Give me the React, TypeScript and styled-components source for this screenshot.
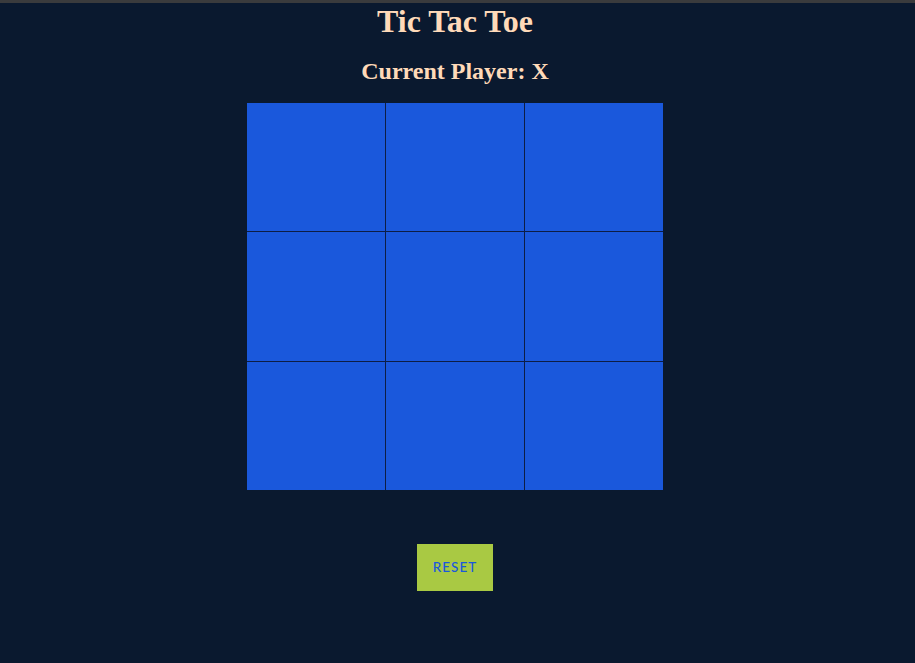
import React, { useState } from "react";
import styled, { createGlobalStyle } from "styled-components";

const Global = createGlobalStyle`
  html, body { margin: 0; padding: 0; background: #0a192f; }
  body { font-family: "Liberation Serif", "Times New Roman", serif; }
`;

const TopStrip = styled.div`
  height: 3px;
  background: #3a3b3d;
`;

const Page = styled.main`
  display: flex;
  flex-direction: column;
  align-items: center;
  min-height: 660px;
  padding-right: 5px;
  background: #0a192f;
`;

const Title = styled.h1`
  margin: 0;
  font-family: "Liberation Serif", "Times New Roman", serif;
  font-size: 32px;
  font-weight: bold;
  color: #ffdab9;
`;

const Status = styled.h2`
  margin: 18px 0 18px;
  font-family: "Liberation Serif", "Times New Roman", serif;
  font-size: 24px;
  font-weight: bold;
  color: #ffdab9;
`;

const Board = styled.div`
  display: grid;
  grid-template-columns: repeat(3, 138px);
  grid-template-rows: 128px 129px 128px;
  gap: 1px;
  background: #0d1d45;
  width: 416px;
  height: 387px;
`;

const Cell = styled.button`
  border: none;
  margin: 0;
  padding: 0;
  background: #1a58dc;
  color: #ffdab9;
  font-family: "Liberation Serif", serif;
  font-size: 64px;
  font-weight: bold;
  cursor: pointer;
`;

const ResetButton = styled.button`
  margin-top: 54px;
  width: 76px;
  height: 47px;
  padding: 0 0 2px;
  border: none;
  background: #a9c943;
  color: #1a58dc;
  font-family: Lato, "Noto Sans", sans-serif;
  font-size: 13.5px;
  font-weight: 500;
  letter-spacing: 1px;
  cursor: pointer;
`;

export default function App() {
  const [cells, setCells] = useState<string[]>(Array(9).fill(""));
  const [player, setPlayer] = useState<"X" | "O">("X");

  const play = (i: number) => {
    if (cells[i]) return;
    const next = cells.slice();
    next[i] = player;
    setCells(next);
    setPlayer(player === "X" ? "O" : "X");
  };

  const reset = () => {
    setCells(Array(9).fill(""));
    setPlayer("X");
  };

  return (
    <>
      <Global />
      <TopStrip />
      <Page>
        <Title>Tic Tac Toe</Title>
        <Status>Current Player: {player}</Status>
        <Board>
          {cells.map((c, i) => (
            <Cell key={i} onClick={() => play(i)}>
              {c}
            </Cell>
          ))}
        </Board>
        <ResetButton onClick={reset}>RESET</ResetButton>
      </Page>
    </>
  );
}
